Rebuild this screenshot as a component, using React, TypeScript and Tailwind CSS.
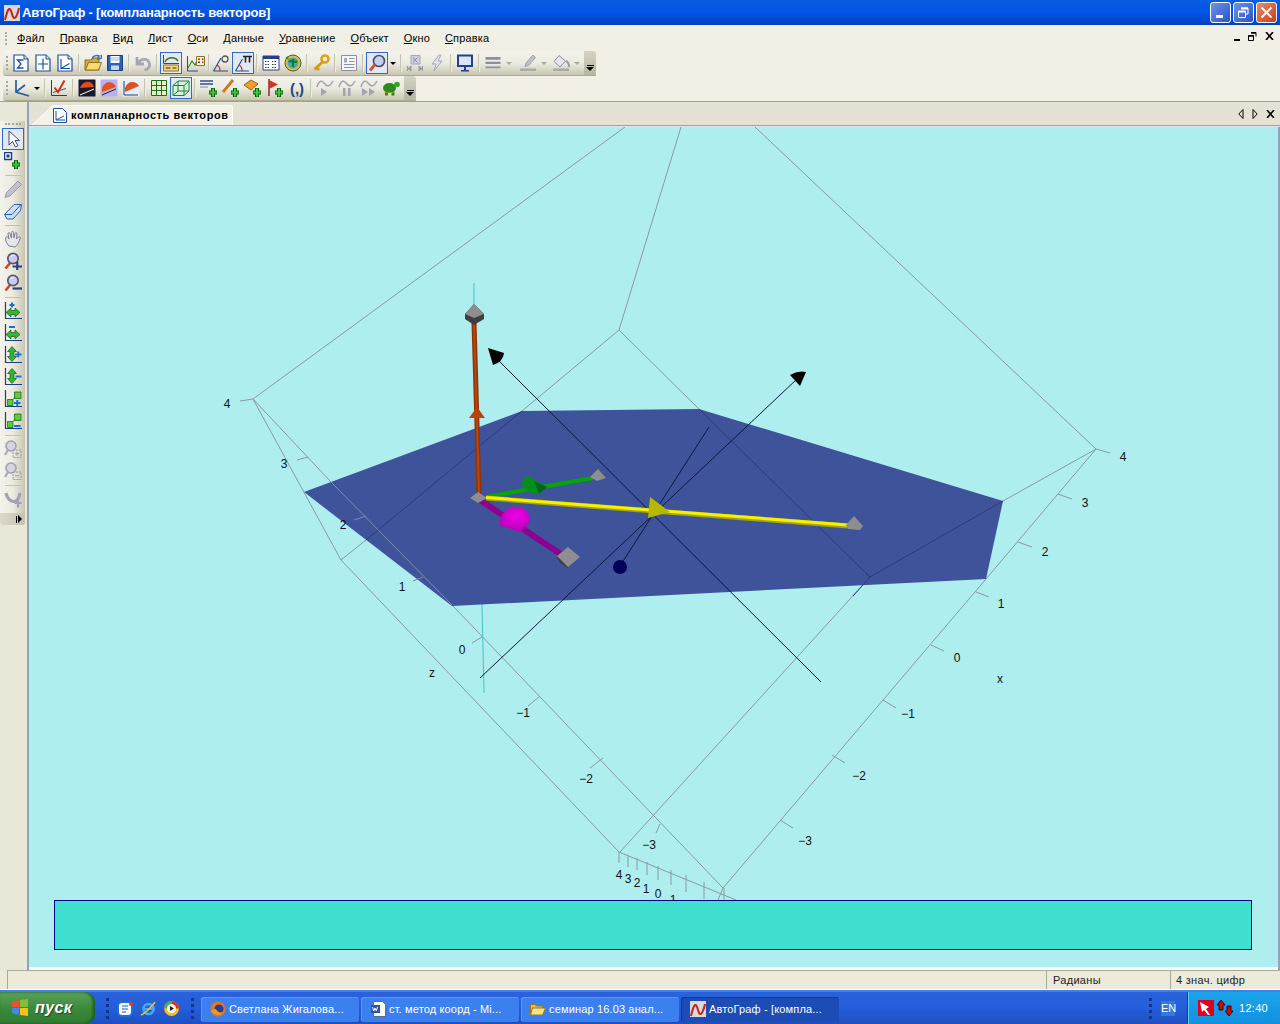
import type { ReactNode } from "react";

const ui = "font-['Liberation_Sans',Arial,sans-serif]";

function Sep({ tight }: { tight?: boolean }) {
  return <div className={`w-[2px] h-[18px] bg-[#c5c2b0] border-r border-white/70 ${tight ? "mx-[0.5px]" : "mx-[2px]"}`} />;
}

function Btn({ children, on }: { children: ReactNode; on?: boolean }) {
  return (
    <div className={`w-[22px] h-[22px] flex items-center justify-center shrink-0 ${on ? "border border-[#316ac5] bg-[#e3e7f0]" : ""}`}>
      <svg width="18" height="18" viewBox="0 0 18 18" className="shrink-0">{children}</svg>
    </div>
  );
}

function Grip() {
  return <div className="w-[3px] h-[14px] ml-[3px] mr-px border-l-2 border-dotted border-[#a8a595]" />;
}

function Chevron() {
  return (
    <div className="w-[12px] self-stretch rounded-r-[3px] bg-gradient-to-b from-[#d6d3c4] to-[#b8b5a3] flex flex-col items-center justify-end pb-[4px]">
      <div className="w-[7px] h-px bg-black mb-px" />
      <div className="w-0 h-0 border-x-[4px] border-x-transparent border-t-[4px] border-t-black" />
    </div>
  );
}

function Caret({ grey }: { grey?: boolean }) {
  return (
    <div className="w-[10px] flex justify-center shrink-0">
      <div className={`w-0 h-0 border-x-[3px] border-x-transparent border-t-[3px] ${grey ? "border-t-[#aaa9a0]" : "border-t-black"}`} />
    </div>
  );
}

const Plus = ({ x = 9, y = 9 }: { x?: number; y?: number }) => (
  <>
    <path d={`M${x + 4} ${y}v9M${x} ${y + 4.5}h8`} stroke="#0a5a0a" strokeWidth="4" fill="none" />
    <path d={`M${x + 4} ${y + 0.5}v8M${x + 0.5} ${y + 4.5}h7`} stroke="#3fc43f" strokeWidth="2" fill="none" />
  </>
);
const Page = ({ children }: { children?: ReactNode }) => (
  <>
    <path d="M2 1h10l4 4v12H2z" fill="#fff" stroke="#1c4f9c" strokeWidth="1.2" />
    <path d="M12 1v4h4" fill="#cfe0f8" stroke="#1c4f9c" />
    {children}
  </>
);
const Lens = () => (
  <>
    <path d="M1.5 16.5l5-6" stroke="#c8462e" strokeWidth="2.6" />
    <circle cx="9" cy="6.5" r="5.2" fill="#c9c9f2" stroke="#55596e" strokeWidth="1.7" />
    <path d="M6.5 5c1-1.6 2.5-2 4-1.6" stroke="#fff" fill="none" />
  </>
);
const GreyLens = () => (
  <>
    <circle cx="7" cy="6" r="5" fill="#d4d4e2" stroke="#a0a0b2" strokeWidth="1.6" />
    <path d="M1 15l3-5" stroke="#a8a8b8" strokeWidth="2.2" />
    <path d="M9 10h8v7.5H9z" fill="none" stroke="#9a9aac" strokeDasharray="2 1" />
  </>
);
const Corner = () => <path d="M1.5 0v16.5H18" stroke="#1d3f80" strokeWidth="1.2" fill="none" />;
const Horiz = () => (
  <path d="M2 10.5l5-4.500v2.500h4V6l5 4.500-5 4.500v-2.500H7V15z" fill="#37b437" stroke="#0c600c" strokeWidth=".7" />
);
const Vert = () => (
  <path d="M8 .5l4.500 5H10v5h2.500L8 15.500l-4.500-5H6v-5H3.500z" fill="#37b437" stroke="#0c600c" strokeWidth=".7" />
);
const Pair = () => (
  <>
    <path d="M3.5 9.5H9v6H3.5zM10.5 2H17v6.500h-6.500z" fill="#62c83e" stroke="#0c600c" strokeWidth=".7" />
    <path d="M9 9.5l2-2" stroke="#0c600c" />
  </>
);
const Wave = () => <path d="M1 8C3 1 6 1 8.5 4.500S14 8 17 2" stroke="#a3a3b4" strokeWidth="1.5" fill="none" />;

function Toolbar1() {
  return (
    <div className="h-[25px] w-[593px] ml-[3px] flex items-center rounded-l-[3px] bg-gradient-to-b from-[#f4f3ec] via-[#ecebe0] to-[#c9c6b3] border-b border-[#aca98f]">
      <Grip />
      <Btn><Page><path d="M11.5 6H5.5l3.500 4-3.500 4h6" stroke="#1c4f9c" strokeWidth="1.3" fill="none" /></Page></Btn>
      <Btn><Page><path d="M9 4.5v11M4 10h10" stroke="#1c4f9c" strokeWidth="1.2" /></Page></Btn>
      <Btn><Page><path d="M5 5v9.5h9M5 14.5l8.500-5" stroke="#1c4f9c" strokeWidth="1.2" fill="none" /></Page></Btn>
      <Sep />
      <Btn>
        <path d="M1 6h6l2-2h6v12H1z" fill="#d9a92e" stroke="#8f7320" />
        <path d="M1.5 16l3-7.500h13l-3 7.500z" fill="#f6da72" stroke="#8f7320" />
        <path d="M8 5c1-3 4-4 7-3l-1 3 4-1-1-3" stroke="#3f6fb8" strokeWidth="1.6" fill="none" />
      </Btn>
      <Btn>
        <path d="M1.5 1.5h15v15h-15z" fill="#2a63b8" stroke="#1c3f80" />
        <path d="M4.5 2h9v7h-9z" fill="#fff" />
        <path d="M5 4h8M5 6h8" stroke="#9db7dc" />
        <path d="M5 11.5h8V16H5z" fill="#c9d6ea" />
      </Btn>
      <Sep />
      <Btn><path d="M3 3v7h7M4 9.5C7 4 14 4 15.5 9.500c.6 3-1.500 5.500-5 6.500" stroke="#a6a6b8" strokeWidth="2.8" fill="none" /></Btn>
      <Sep />
      <Btn on>
        <path d="M3 8c2-5 10-6 13-1" stroke="#2d7b2d" fill="none" strokeWidth="1.5" />
        <path d="M1.5 1v8.500H17" stroke="#1c4f9c" fill="none" />
        <path d="M1.5 11h15v6h-15z" fill="#f2d680" stroke="#8f7320" />
        <path d="M3.5 14h5M10.5 14h4" stroke="#333" strokeWidth="1.2" />
      </Btn>
      <div className="w-[3px]" />
      <Btn>
        <path d="M1 14l4-7 3 4 3-6" stroke="#2d8a2d" strokeWidth="1.2" fill="none" />
        <path d="M.5 2v15H11" stroke="#1c4f9c" fill="none" />
        <path d="M9.5 2.5h8v9h-8z" fill="#fbf3cf" stroke="#8f7320" />
        <path d="M11 4.5h2V6h-2zM15 7.5h1.500V9H15z" fill="#c22" />
        <path d="M15 4.5h1.500V6H15zM11 7.5h2V9h-2z" fill="#24408a" />
      </Btn>
      <Sep tight />
      <Btn><path d="M1.5 17L9 4M1.5 17H16" stroke="#2b4f8f" strokeWidth="1.2" fill="none" /><path d="M5 11c2.500 1 3 3.500 3 6" stroke="#b33" strokeWidth="1.2" fill="none" /><circle cx="13" cy="5" r="3" fill="none" stroke="#555" strokeWidth="1.3" /></Btn>
      <Btn on><path d="M1.5 17L8.500 5M1.5 17H15" stroke="#2b4f8f" strokeWidth="1.2" fill="none" /><path d="M5 11c2.500 1 3 3.500 3 6" stroke="#b33" strokeWidth="1.2" fill="none" /><path d="M9 2.5h9M11.5 2.5v6M15.5 2.5v6" stroke="#222" strokeWidth="1.6" /></Btn>
      <Sep />
      <Btn>
        <path d="M1 2h16v14H1z" fill="#fff" stroke="#24408a" />
        <path d="M1 2h16v3H1z" fill="#24408a" />
        <path d="M3 7.5h5M10 7.5h5M3 10.5h5M10 10.5h5M3 13.5h5M10 13.5h5" stroke="#345" strokeDasharray="1.5 1" />
      </Btn>
      <Btn>
        <circle cx="9" cy="9" r="8" fill="#d9c247" stroke="#5a5a2a" />
        <circle cx="9" cy="9" r="5.5" fill="#4aa8b8" />
        <path d="M9 5v8M5 8c3-3 6 2 8-1" stroke="#1a7a2a" strokeWidth="2.2" fill="none" />
        <path d="M1 4l3-2 1 4z" fill="#2a9a2a" />
      </Btn>
      <Sep />
      <Btn><circle cx="13" cy="5" r="3.5" fill="none" stroke="#e0a118" strokeWidth="2.6" /><path d="M11 7.5l-8.500 8M4.500 13.500l2.500 2.500" stroke="#d79a16" strokeWidth="2.8" /></Btn>
      <Sep />
      <Btn><path d="M1.5 1.5h15v15h-15z" fill="#f6f6f8" stroke="#8c8fa8" /><path d="M4 4h3v4.500H4z" fill="#a8aac0" /><path d="M9 4.5h5.500M9 7.5h5.500M4 10.5h10.500M4 13.5h10.500" stroke="#8c8fa8" /></Btn>
      <Sep />
      <Btn on><circle cx="11" cy="7" r="5.5" fill="#c8d0f0" stroke="#4d5268" strokeWidth="1.7" /><path d="M2 16.5l5-6" stroke="#d0502e" strokeWidth="2.8" /></Btn>
      <Caret />
      <Sep />
      <Btn><path d="M5 1.5h9V10H5z" fill="#d0d0dc" stroke="#a6a6b8" /><path d="M8 3.5v5M11.5 3.500L9 6l2.500 2.500" stroke="#8f8fa6" fill="none" /><path d="M1.5 12v5M5 12l-3 2.500L5 17zM16.5 12v5M13 12l3 2.500L13 17z" fill="#9a9aae" stroke="#9a9aae" /></Btn>
      <Btn><path d="M11 1L4 10h4l-2 7 8-10h-4l3-6z" fill="#e3e3e6" stroke="#a6a6b8" /></Btn>
      <Sep />
      <Btn><path d="M2 1.5h14V12H2z" fill="#d7e6fb" stroke="#24408a" strokeWidth="2" /><path d="M8 13h2v3H8zM5 16h8v1.500H5z" fill="#24408a" /></Btn>
      <Sep />
      <Btn><path d="M1.5 3h15v2.800h-15zM1.5 7.800h15V10h-15zM1.5 12.500h15v1.800h-15z" fill="#8f8f9c" /></Btn>
      <Caret grey />
      <div className="w-[3px]" />
      <Btn><path d="M14 1l2.500 2.500-7 8-3.500 1 1-3.500z" fill="#c0c0c8" stroke="#a0a0ac" /><path d="M1 14.5h16V17H1z" fill="#aaa" /></Btn>
      <Caret grey />
      <div className="w-px" />
      <Btn><path d="M7 1.5L13.500 7 8 13 2 7.500z" fill="#e6e6ec" stroke="#8c8c9c" /><path d="M14 7c2 1 3 3 3 6" stroke="#9a9aa6" strokeWidth="2" fill="none" /><path d="M1 14.5h16V17H1z" fill="#aaa" /></Btn>
      <Caret grey />
      <div className="flex-1" />
      <Chevron />
    </div>
  );
}

function Toolbar2() {
  return (
    <div className="h-[25px] w-[413px] ml-[3px] flex items-center rounded-l-[3px] bg-gradient-to-b from-[#f4f3ec] via-[#ecebe0] to-[#c9c6b3] border-b border-[#aca98f]">
      <Grip />
      <Btn><path d="M4 1v12l13 4M4 13l9-7" stroke="#2b5d9c" strokeWidth="1.7" fill="none" /></Btn>
      <Caret />
      <Sep />
      <Btn><path d="M1.5 1v15.500H17" stroke="#1d3f80" fill="none" /><path d="M3 13.5l13-4" stroke="#2b5d9c" /><path d="M4.5 8.500L8 13 14.500 1.500" stroke="#d42a1a" strokeWidth="2" fill="none" /></Btn>
      <Sep />
      <Btn><path d="M.5.5h17v17H.5z" fill="#1a1a2c" /><path d="M2 9c3-8 12-8 14-1z" fill="#e24a20" /><path d="M2 16L16 10" stroke="#fff" /></Btn>
      <Btn><path d="M.5.5h17v17H.5z" fill="#b8b0f0" /><path d="M2 9c3-8 12-7 14-1L2 13z" fill="#e0531f" /><path d="M2 16L16 10" stroke="#222" /></Btn>
      <Btn><path d="M.5.5h17v17H.5z" fill="#e6eefa" /><path d="M3 9c3-8 11-7 14-2L3 13z" fill="#e0531f" /><path d="M2 2v14h14" stroke="#1d3f80" fill="none" /></Btn>
      <Sep />
      <Btn><path d="M1.5 1.5h15v15h-15z" fill="#e8f2c8" stroke="#197019" /><path d="M6.5 2v14M11.5 2v14M2 6.500h14M2 11.500h14" stroke="#197019" /></Btn>
      <Btn on><path d="M1 6.5L6 2h11v10l-5 4.500H1z" fill="#dcefdc" stroke="#0e8c3a" /><path d="M1 6.5h11v10M12 6.500L17 2M6 2v10H17M6 12l-5 4.500" stroke="#0e8c3a" fill="none" /></Btn>
      <Sep />
      <Btn><path d="M0 2h13M0 5h13" stroke="#2e4d96" strokeWidth="1.7" /><path d="M0 8h8" stroke="#8a8a9a" /><Plus /></Btn>
      <Btn><path d="M1 13L11 1" stroke="#d07820" strokeWidth="2.8" /><Plus /></Btn>
      <Btn><path d="M0 6l7-5 7 4-7 6z" fill="#f0a028" stroke="#a0601a" /><Plus /></Btn>
      <Btn><path d="M3 0v17" stroke="#8a2a2a" strokeWidth="1.5" /><path d="M3 1l9 4.500L3 10z" fill="#d8301c" /><Plus /></Btn>
      <div className={`w-[22px] shrink-0 text-center text-[15px] leading-none font-bold text-[#26467e] ${ui}`}>(,)</div>
      <Sep />
      <Btn><Wave /><path d="M5 9l6 4-6 4z" fill="#a3a3b4" /></Btn>
      <Btn><Wave /><path d="M5 9h2.500v8H5zM10 9h2.500v8H10z" fill="#a3a3b4" /></Btn>
      <Btn><Wave /><path d="M2 9l6 4-6 4zM9 9l6 4-6 4z" fill="#a3a3b4" /></Btn>
      <Btn>
        <ellipse cx="7.5" cy="9" rx="6.5" ry="5" fill="#2d8a1e" />
        <path d="M2 12c3 2 8 2 11 0l-1 2H3z" fill="#d8a418" />
        <circle cx="15" cy="5.5" r="2.8" fill="#38a226" />
        <path d="M3 13.5h3v3H3zM9.500 13.500h3v3h-3z" fill="#2d8a1e" />
      </Btn>
      <div className="flex-1" />
      <Chevron />
    </div>
  );
}

const side: (ReactNode | null)[] = [
  <Btn on><path d="M5 1v14l3.500-3.500 3 5.500 2.500-1.300-3-5.200h4.500z" fill="#fff" stroke="#3c4a6a" /></Btn>,
  <Btn><path d="M.5.5h7v7h-7z" fill="#fff" stroke="#1c3f8c" strokeWidth="1.5" /><path d="M2.5 2.5h3v3h-3z" fill="#1c3f8c" /><Plus x={8} y={8} /></Btn>,
  null,
  <Btn><path d="M14 1l3.500 3.500L6 16l-5 1.500L2.500 12.500z" fill="#c2c2cc" stroke="#9a9aa8" /></Btn>,
  <Btn><path d="M.5 12.500L10 2.500h7.500l-1 6L9 17H3z" fill="#cfe0f8" stroke="#2b5ca8" /><path d="M.5 12.500H8l9-10" stroke="#2b5ca8" fill="none" /></Btn>,
  null,
  <Btn>
    <path d="M5 16C2 13 1 9 2 7 3 6 4 7 5 9L4 4C4 2 6 2 6 4L7.500 8V2.500C7.500 1 9.500 1 9.500 2.500L10 8l1-4.500C11.500 2 13 2.500 13 4l-.5 5 2-2C16 6 16.500 7.500 16 9 14.500 13 13 16 11 17z" fill="#e4e4ec" stroke="#7e7e90" />
  </Btn>,
  <Btn><Lens /><path d="M8.5 14.5H18M13.250 10v8" stroke="#2c3f7c" strokeWidth="2.2" /></Btn>,
  <Btn><Lens /><path d="M8.5 14.5H18" stroke="#2c3f7c" strokeWidth="2.2" /></Btn>,
  null,
  <Btn><Corner /><Horiz /><path d="M5.5 3h5M8 .5v5" stroke="#1a70d0" strokeWidth="2" /></Btn>,
  <Btn><Corner /><Horiz /><path d="M5 3h6" stroke="#1a70d0" strokeWidth="2" /></Btn>,
  <Btn><Corner /><Vert /><path d="M11 8.5h6.500M14.250 5.500v6" stroke="#1a70d0" strokeWidth="2" /></Btn>,
  <Btn><Corner /><Vert /><path d="M11.5 8.5h6" stroke="#1a70d0" strokeWidth="2" /></Btn>,
  <Btn><Corner /><Pair /><path d="M10 13h6.500M13.250 10v6.500" stroke="#1a70d0" strokeWidth="2" /></Btn>,
  <Btn><Corner /><Pair /><path d="M10 14h6.500" stroke="#1a70d0" strokeWidth="2" /></Btn>,
  null,
  <Btn><GreyLens /><path d="M13 12v3.500M11 13.750h4" stroke="#9a9aac" /></Btn>,
  <Btn><GreyLens /><path d="M11 13.750h4" stroke="#9a9aac" /></Btn>,
  null,
  <Btn><path d="M2 3c1 6 5 8.500 8 8.500s5-3 6-8.500" stroke="#a2a2b2" strokeWidth="3.2" fill="none" /><path d="M10.5 13h7M14 9.500v8" stroke="#a2a2b2" strokeWidth="2.2" /></Btn>,
];

function LeftBar() {
  return (
    <div className="w-[25px] h-[404px] rounded-b-[3px] flex flex-col items-center bg-gradient-to-r from-[#f4f3ec] via-[#ecebe0] to-[#c9c6b3] overflow-hidden">
      <div className="h-[7px] shrink-0 pt-[2px] w-[16px]">
        <div className="border-t-2 border-dotted border-[#a8a595]" />
      </div>
      {side.map((s, i) =>
        s ? (
          <div key={i} className="shrink-0">{s}</div>
        ) : (
          <div key={i} className="w-[16px] h-px my-[2.5px] shrink-0 bg-[#c5c2b0]" />
        ),
      )}
      <div className="flex-1" />
      <div className="w-full h-[12px] shrink-0 bg-gradient-to-r from-[#dcd9ca] to-[#c4c1b0] flex items-center justify-end gap-px pr-[3px]">
        <div className="w-px h-[7px] bg-black" />
        <div className="w-0 h-0 border-y-[4px] border-y-transparent border-l-[4px] border-l-black" />
      </div>
    </div>
  );
}

const under = [
  "M625 127L253 399", "M681 127L619 330", "M755 127L1096 449", "M619 330L522 411",
  "M253 399L341 560", "M341 560L619 852", "M1096 449L1003 501", "M870 577L620 852",
  "M619 330L699 409", "M341 560L366 540", "M253 399L331 482", "M452 605L723 888",
  "M1096 449L986 579", "M986 579L723 888", "M619 852L736 900", "M723 888L718 900",
];
const ticks = [
  "M240 401L253 399", "M297 460L308 457", "M472 643L482 637",
  "M1096 449L1110 453", "M1058 494L1072 499", "M1018 542L1032 547", "M976 592L989 597",
  "M931 645L944 651", "M883 700L896 708", "M832 755L845 763", "M780 820L793 828",
  "M540 696L528 706", "M603 758L590 768", "M660 824L656 833",
  "M619 852V863", "M628 855V867", "M637 858V870", "M647 862V875", "M658 866V880",
  "M671 870V885", "M686 875V892", "M704 882V899", "M724 888V900",
];
const labels: [number, number, string][] = [
  [227, 408, "4"], [284, 468, "3"], [343, 529, "2"], [402, 591, "1"], [462, 654, "0"],
  [432, 677, "z"], [1123, 461, "4"], [1085, 507, "3"], [1045, 556, "2"], [1001, 608, "1"],
  [957, 662, "0"], [908, 718, "−1"], [859, 780, "−2"], [805, 845, "−3"], [1000, 683, "x"],
  [523, 717, "−1"], [586, 783, "−2"], [649, 849, "−3"], [619, 879, "4"], [628, 883, "3"],
  [637, 887, "2"], [646, 893, "1"], [658, 898, "0"], [673, 904, "1"],
];

// coordinates are page pixels; the viewBox shifts them into the canvas
function Scene() {
  return (
    <svg className="block w-full h-full" viewBox="29 127 1249 840">
      <defs>
        <radialGradient id="dome" cx="0.55" cy="0.35" r="0.7">
          <stop offset="0" stopColor="#f000e8" />
          <stop offset="1" stopColor="#b000b0" />
        </radialGradient>
        <linearGradient id="yel" x1="0" y1="0" x2="0" y2="1">
          <stop offset="0" stopColor="#f6f400" />
          <stop offset="1" stopColor="#a8a400" />
        </linearGradient>
      </defs>
      <g fill="none" stroke="#8a9a9e">
        {under.map((d) => <path key={d} d={d} />)}
        {ticks.map((d) => <path key={d} d={d} />)}
      </g>
      <path d="M482 604L484 693" stroke="#3fc6c8" />
      <path d="M474 283V305" stroke="#3fc6c8" />
      <path d="M304 492L522 411L699 409L1003 501L986 579L452 606Z" fill="#3f539b" />
      <g fill="none">
        <path d="M366 540L522 411M699 409L870 577L1003 501M870 577L853 596" stroke="#2c3a80" />
        <path d="M331 482L452 605M354 520L366 516M413 581L423 577" stroke="#7f8cab" />
        <path d="M497 359L821 682" stroke="#10163c" />
        <path d="M797 379L480 678" stroke="#10163c" />
        <path d="M709 427L620 566" stroke="#10163c" />
      </g>
      <g fontSize="12" fill="#111" textAnchor="middle" fontFamily="Liberation Sans">
        {labels.map(([x, y, t]) => <text key={`${x}${y}`} x={x} y={y}>{t}</text>)}
      </g>
      <path d="M488 348L504 353Q503 362 493 365Z" fill="#000" />
      <path d="M790 375Q798 370 806 372L800 386Z" fill="#000" />
      <circle cx="620" cy="567" r="7" fill="#00005c" />
      {/* brown vector */}
      <path d="M474 322L479 494" stroke="#8f3408" strokeWidth="5" />
      <path d="M474 322L479 494" stroke="#b8460f" strokeWidth="2" />
      <path d="M469 418L477 407L485 418Z" fill="#b8430e" />
      <path d="M465 314L474 304L484 314L484 319L474 325L465 319Z" fill="#3e3e3e" />
      <path d="M465 314L474 304L484 314L474 318Z" fill="#8e8e8e" />
      {/* green vector */}
      <path d="M486 497L593 478" stroke="#00a800" strokeWidth="4" />
      <path d="M528 476Q520 480 523 487Q528 494 539 494L547 487Z" fill="#00901a" />
      <path d="M534 481L547 487L539 494Z" fill="#00661a" />
      <path d="M590 477L598 469L606 478L597 481Z" fill="#8e8e8e" />
      {/* magenta vector */}
      <path d="M480 500L562 555" stroke="#8e0090" strokeWidth="6" />
      <path d="M499 525Q502 507 516 507Q531 508 530 522L520 532Z" fill="url(#dome)" />
      <path d="M556 557L560 563L568 568L568 560Z" fill="#3e3e3e" />
      <path d="M557 556L568 547L580 557L568 567Z" fill="#8e8e8e" />
      {/* yellow vector */}
      <path d="M470 498L478 492L487 498L478 503Z" fill="#8e8e8e" />
      <path d="M486 498L848 526" stroke="#a8a400" strokeWidth="5" />
      <path d="M486 497.5L848 525" stroke="#f4f200" strokeWidth="3" />
      <path d="M650 497L670 512L648 518Z" fill="#b8b800" />
      <path d="M846 525L854 516L863 526L860 530L848 529Z" fill="#8e8e8e" />
    </svg>
  );
}

function WinBtn({ children, red }: { children: ReactNode; red?: boolean }) {
  return (
    <div
      className={`w-[21px] h-[21px] rounded-[3px] border border-white flex items-center justify-center ${
        red ? "bg-gradient-to-br from-[#e98a6c] to-[#c83a10]" : "bg-gradient-to-br from-[#6f94ea] to-[#2a52c8]"
      }`}
    >
      {children}
    </div>
  );
}

function MenuItem({ u, rest }: { u: string; rest: string }) {
  return (
    <span className="mr-[15px]">
      <span className="underline">{u}</span>
      {rest}
    </span>
  );
}

function TaskBtn({ icon, label, active }: { icon: ReactNode; label: string; active?: boolean }) {
  return (
    <div
      className={`w-[158px] h-[25px] mt-[2px] mr-[2px] rounded-[3px] flex items-center pl-[9px] gap-[3px] text-[11px] text-white tracking-[0.15px] ${
        active ? "bg-[#1c4cb4] shadow-[inset_1px_1px_1px_#103a90]" : "bg-[#3c80f0] shadow-[inset_1px_1px_0_#5f98f4]"
      }`}
    >
      {icon}
      <span className="truncate">{label}</span>
    </div>
  );
}

const QuickDots = () => <div className="w-[3px] h-[21px] border-l-[3px] border-dotted border-[#12338f]" />;

const AppIcon = () => (
  <svg width="16" height="16" viewBox="0 0 16 16" className="shrink-0">
    <rect width="16" height="16" fill="#d9d9d9" />
    <path d="M1 15C4 2 6 1 8 9s5 3 7-6" stroke="#c4241c" strokeWidth="2" fill="none" />
  </svg>
);

export default function App() {
  return (
    <div className={`w-[1280px] h-[1024px] overflow-hidden flex flex-col bg-[#ecead8] text-black ${ui}`}>
      {/* title bar */}
      <div className="h-[25px] shrink-0 flex items-center pl-[4px] pr-[3px] bg-gradient-to-b from-[#0a5ce0] via-[#0055e6] to-[#0040c0]">
        <div className="mr-[2px]"><AppIcon /></div>
        <span className="text-[13px] font-bold text-white tracking-[-0.2px]">АвтоГраф - [компланарность векторов]</span>
        <div className="flex-1" />
        <div className="flex gap-[2px]">
          <WinBtn><div className="w-[7px] h-[3px] bg-white mt-[8px] -ml-[3px]" /></WinBtn>
          <WinBtn>
            <svg width="13" height="13" viewBox="0 0 13 13" fill="none" stroke="#fff"><path d="M4 2h7v6H9M1.5 5.5h7v6h-7z" /><path d="M4 2.5h7M1.5 5.5h7" strokeWidth="2" /></svg>
          </WinBtn>
          <WinBtn red>
            <svg width="13" height="13" viewBox="0 0 13 13" stroke="#fff" strokeWidth="2"><path d="M1.5 1.5l10 10M11.5 1.5l-10 10" /></svg>
          </WinBtn>
        </div>
      </div>
      {/* menu and toolbars */}
      <div className="h-[77px] shrink-0 bg-[#f2f0e4] border-b border-[#8ea3bc] flex flex-col">
        <div className="h-[26px] shrink-0 flex items-center text-[11px] pl-[5px] tracking-[0.15px]">
          <div className="h-[13px] w-[3px] mr-[9px] border-l-2 border-dotted border-[#b0ad9c]" />
          <MenuItem u="Ф" rest="айл" />
          <MenuItem u="П" rest="равка" />
          <MenuItem u="В" rest="ид" />
          <MenuItem u="Л" rest="ист" />
          <MenuItem u="О" rest="си" />
          <MenuItem u="Д" rest="анные" />
          <MenuItem u="У" rest="равнение" />
          <MenuItem u="О" rest="бъект" />
          <MenuItem u="О" rest="кно" />
          <MenuItem u="С" rest="правка" />
          <div className="flex-1" />
          <div className="w-[40px] flex items-center justify-between mr-[6px] -mt-[4px]">
            <div className="w-[6px] h-[2px] bg-black mt-[7px]" />
            <svg width="9" height="9" viewBox="0 0 9 9" fill="none" stroke="#000"><path d="M3 .5h5v4M.5 3.5h5v5h-5z" /><path d="M3 1h5M.5 4h5" strokeWidth="1.4" /></svg>
            <svg width="9" height="8" viewBox="0 0 9 8" stroke="#000" strokeWidth="1.6"><path d="M1 0l7 8M8 0l-7 8" /></svg>
          </div>
        </div>
        <Toolbar1 />
        <Toolbar2 />
      </div>
      {/* work area */}
      <div className="flex-1 min-h-0 flex">
        <div className="w-[27px] shrink-0 pt-[19px] bg-[#e9e7d7]">
          <LeftBar />
        </div>
        <div className="flex-1 min-w-0 flex flex-col border-l-2 border-[#8ea3bc]">
          {/* tab strip */}
          <div className="h-[24px] shrink-0 flex items-end bg-[#e4e2d5] border-b border-[#8ea3bc]">
            <svg width="24" height="20" viewBox="0 0 24 20" className="shrink-0">
              <path d="M3 20L24 .5V20z" fill="#f3f2e9" />
              <path d="M3 20L24 .5" stroke="#fff" />
            </svg>
            <div className="h-[20px] w-[180px] pb-px flex items-center bg-[#f3f2e9] border-t border-r border-white rounded-tr-[3px]">
              <svg width="14" height="15" viewBox="0 0 14 15" className="mr-[4px] shrink-0">
                <path d="M.5.5h9l4 4v10H.5z" fill="#fff" stroke="#1c4f9c" />
                <path d="M3 3v9h9M3 12l8-4" stroke="#1c4f9c" fill="none" />
              </svg>
              <span className="text-[11px] font-bold tracking-[0.58px] whitespace-nowrap">компланарность векторов</span>
            </div>
            <div className="flex-1" />
            <div className="flex items-center gap-[8px] self-center pr-[5px]">
              <svg width="6" height="10" viewBox="0 0 6 10" fill="none" stroke="#000"><path d="M5 .5L.8 5 5 9.500z" /></svg>
              <svg width="6" height="10" viewBox="0 0 6 10" fill="none" stroke="#000"><path d="M1 .5L5.200 5 1 9.500z" /></svg>
              <svg width="9" height="8" viewBox="0 0 9 8" stroke="#000" strokeWidth="1.6"><path d="M1 0l7 8M8 0l-7 8" /></svg>
            </div>
          </div>
          <div className="h-px shrink-0 bg-[#dfe6ee]" />
          <div className="flex-1 min-h-0 flex">
            <div className="flex-1 min-w-0 relative bg-[#aeeeee] border-b-[3px] border-white">
              <Scene />
              <div className="absolute left-[25px] right-[26px] top-[773px] h-[50px] bg-[#40e0d0] border border-[#00008b]" />
            </div>
            <div className="w-[2px] shrink-0 bg-[#8ea3bc]" />
          </div>
        </div>
      </div>
      {/* status bar */}
      <div className="h-[20px] shrink-0 flex text-[11px] text-[#222] bg-[#ecead8] border-b border-white pl-[7px] tracking-[0.3px]">
        <div className="flex-1 border-l border-t border-[#aca899] border-r" />
        <div className="w-[124px] border-t border-r border-[#aca899] pl-[6px] flex items-center">Радианы</div>
        <div className="w-[109px] border-t border-[#aca899] pl-[5px] flex items-center">4 знач. цифр</div>
      </div>
      {/* taskbar */}
      <div className="h-[34px] shrink-0 flex items-center bg-gradient-to-b from-[#2a62d8] via-[#245edc] to-[#1f4fc0] border-t-[2px] border-[#3f80ee]">
        <div className="w-[95px] h-[32px] mr-[11px] rounded-r-[10px] bg-gradient-to-b from-[#5aa35a] via-[#3c8a3c] to-[#2f7a32] flex items-center pl-[11px] shadow-[inset_-2px_0_3px_#1c5a20]">
          <svg width="19" height="18" viewBox="0 0 19 18" className="mr-[5px]">
            <path d="M1 3l7-2v7H1z" fill="#e8552c" />
            <path d="M9 1l8-1v8H9z" fill="#7ec234" />
            <path d="M1 9h7v7l-7-2z" fill="#3b8ee8" />
            <path d="M9 9h8v8l-8-1z" fill="#f5c21c" />
          </svg>
          <span className="text-white font-bold italic text-[16px] tracking-[0.4px] [text-shadow:1px_1px_1px_#224422]">пуск</span>
        </div>
        <QuickDots />
        <div className="flex items-center gap-[6px] ml-[8px] mr-[11px]">
          <svg width="17" height="17" viewBox="0 0 17 17"><rect x="1" y="2" width="14" height="14" rx="4" fill="#f5f8ff" stroke="#1c70d8" strokeWidth="2" /><path d="M5 6h6M5 9h6M5 12h4" stroke="#1c60c0" /><circle cx="14" cy="4" r="2" fill="#e04020" /></svg>
          <svg width="17" height="17" viewBox="0 0 17 17"><ellipse cx="8.5" cy="9" rx="5" ry="5" fill="none" stroke="#4aa8f0" strokeWidth="2.6" /><path d="M4 9h9" stroke="#4aa8f0" strokeWidth="2" /><path d="M1 15C5 14 13 5 15 2" stroke="#e8c040" strokeWidth="1.6" fill="none" /></svg>
          <svg width="17" height="17" viewBox="0 0 17 17"><circle cx="8.5" cy="8.5" r="7.5" fill="#f4c020" /><path d="M8.5 1A7.500 7.500 0 0 1 16 8.500H8.500z" fill="#d83020" /><path d="M1 8.5A7.500 7.500 0 0 1 8.500 1v7.500z" fill="#4ab040" /><circle cx="8.5" cy="8.5" r="4.5" fill="#f5f5f5" /><path d="M7 6l4 2.500L7 11z" fill="#222" /></svg>
        </div>
        <QuickDots />
        <div className="w-[7px]" />
        <TaskBtn
          label="Светлана Жигалова..."
          icon={
            <svg width="16" height="16" viewBox="0 0 16 16" className="shrink-0"><circle cx="8" cy="8" r="7.5" fill="#e8741c" /><circle cx="9" cy="8" r="4.5" fill="#26408f" /><path d="M1 9c1 5 9 7 12 2-3 1-6 0-7-3z" fill="#f09a20" /></svg>
          }
        />
        <TaskBtn
          label="ст. метод коорд - Mi..."
          icon={
            <svg width="16" height="16" viewBox="0 0 16 16" className="shrink-0"><path d="M3.5.5h9l3 3v12h-12z" fill="#fff" stroke="#667" /><rect x="1" y="4" width="9" height="8" fill="#2a56a8" /><path d="M2.5 6l1.200 4 1.300-3 1.300 3 1.200-4" stroke="#fff" fill="none" /></svg>
          }
        />
        <TaskBtn
          label="семинар 16.03 анал..."
          icon={
            <svg width="16" height="14" viewBox="0 0 16 14" className="shrink-0"><path d="M.5 2.5h5l1 1.500h6V13H.5z" fill="#e3bb4c" stroke="#9a7a20" /><path d="M.5 13l2-7h13l-3 7z" fill="#f7e38e" stroke="#9a7a20" /></svg>
          }
        />
        <TaskBtn active label="АвтоГраф - [компла..." icon={<AppIcon />} />
        <div className="flex-1" />
        <QuickDots />
        <div className="w-[14px] h-[15px] bg-[#3a78d8] text-[11px] text-white leading-[15px] text-center ml-[9px] mr-[12px]">EN</div>
        <div className="w-[93px] h-full flex items-center bg-gradient-to-b from-[#1ca4ea] to-[#1290e0] border-l border-[#0a3a9a] shadow-[inset_1px_0_0_#5fd0f4] pl-[10px] gap-[2px]">
          <svg width="16" height="16" viewBox="0 0 16 16" className="shrink-0"><rect width="16" height="16" fill="#e0001c" /><path d="M2 2l9 5-3 2 4 6-2 0-4-5-2 2z" fill="#fff" /></svg>
          <svg width="18" height="18" viewBox="0 0 18 18" className="shrink-0"><path d="M5 1l4 5H7v5H3V6H1zM13 17l4-5h-2V7h-4v5H9z" fill="#e00000" stroke="#000" strokeWidth=".8" /></svg>
          <span className="text-[11px] text-white ml-[3px] tracking-[0.3px]">12:40</span>
        </div>
      </div>
    </div>
  );
}
